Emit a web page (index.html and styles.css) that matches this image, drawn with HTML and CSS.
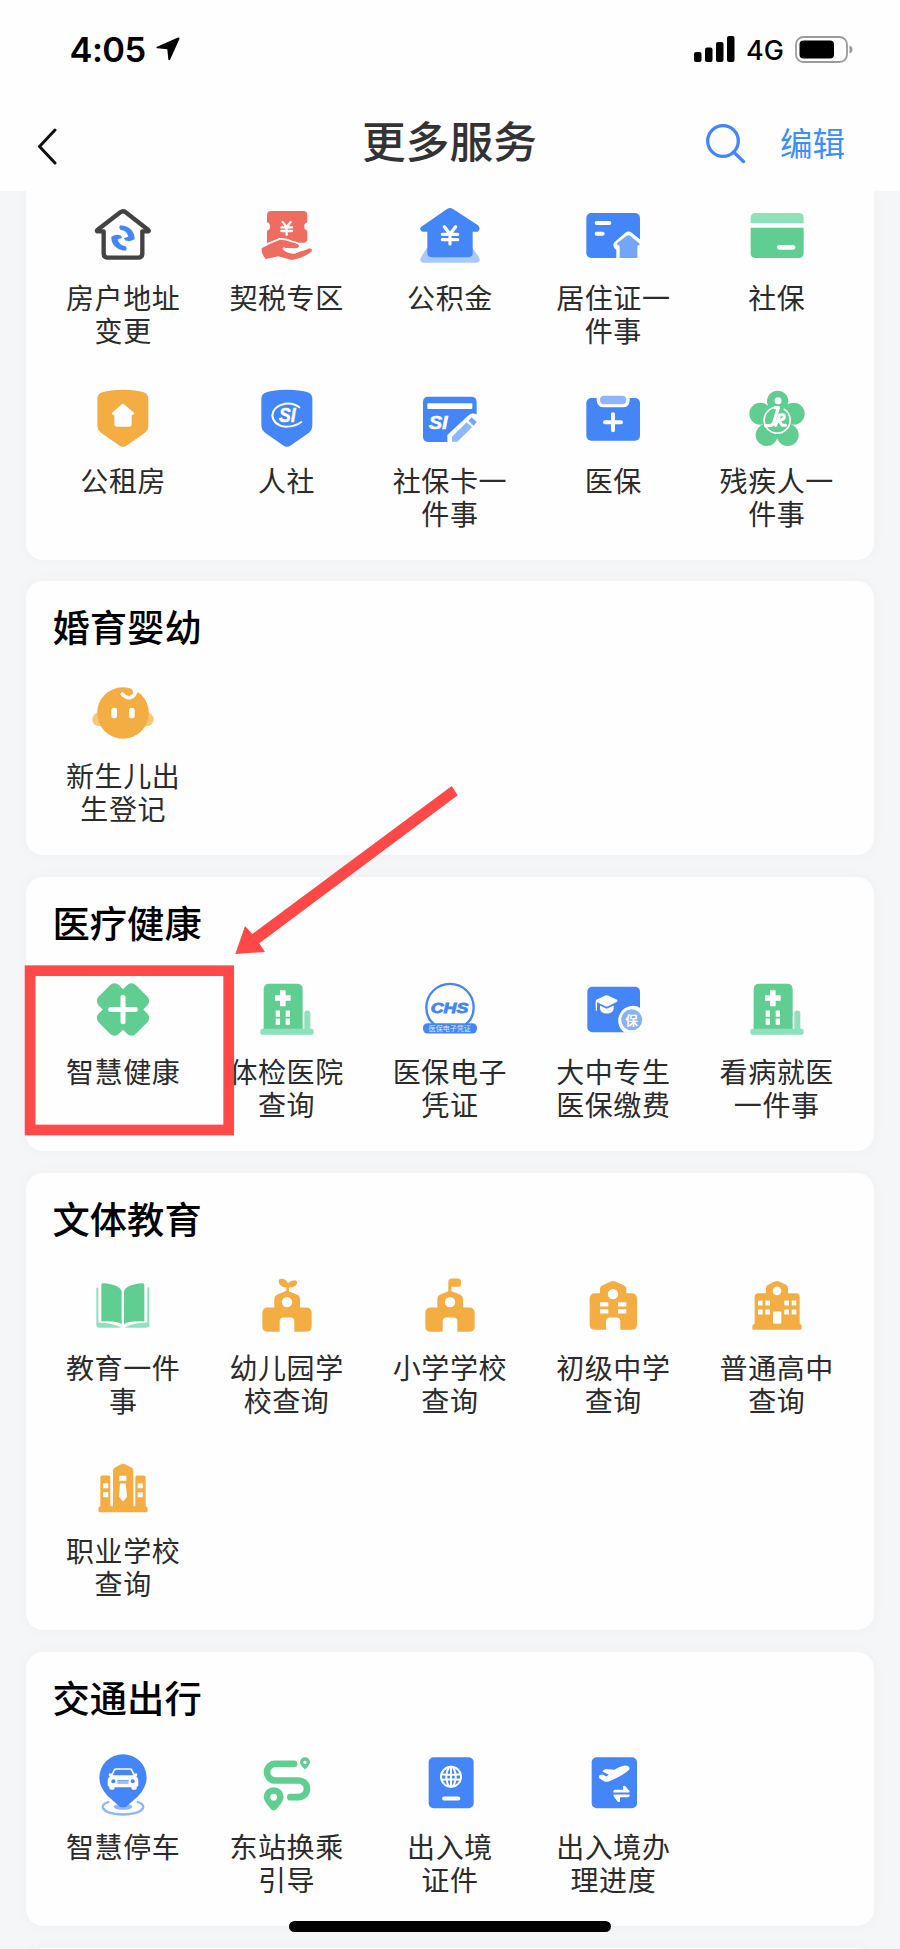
FILE: index.html
```html
<!DOCTYPE html>
<html lang="zh-CN">
<head>
<meta charset="utf-8">
<title>更多服务</title>
<link rel="stylesheet" href="styles.css">
</head>
<body>
<svg class="defs" aria-hidden="true">
  <symbol id="shield" viewBox="214 588 192 192"><path d="M310 599Q350 599 372 607Q386 612 386 626V706Q386 720 376 728L322 766Q310 775 298 766L244 728Q233 720 233 706V626Q233 612 248 607Q270 599 310 599Z"/></symbol>
  <symbol id="hospital" viewBox="705 352.5 192 192">
    <rect class="green-l" x="853" y="453" width="18" height="64" rx="9"/>
    <path class="green" d="M731 510V390Q731 373 748 373H831Q848 373 848 390V510Z"/>
    <rect class="green-l" x="721" y="508" width="160" height="18" rx="8"/>
    <path class="white" d="M780 392h17v15h15v17h-15v16h-17v-16h-15v-17h15zM767 453h13v19h-13zM797 453h13v19h-13zM767 477h13v19h-13zM797 477h13v19h-13z"/>
  </symbol>
  <symbol id="school" viewBox="705 310.5 192 192">
    <path class="orange" d="M763 414V388Q763 379 771 376L794 366Q801 362 808 366L832 376Q840 379 840 388V414H858Q875 414 875 431V470Q875 487 858 487H823V456Q823 444 811 444H791Q779 444 779 456V487H744Q727 487 727 470V431Q727 414 744 414Z"/>
    <circle class="white" cx="801" cy="398" r="15.500"/>
  </symbol>
</svg>
<div class="screen">
  <header class="header">
    <div class="status">
      <div class="clock"><span>4:05</span>
        <svg width="24" height="24" viewBox="0 0 24 24"><path d="M1 9.800L22 .6Q24 .2 23.400 2L14.200 22.600Q13 24 12.300 22.300L11.300 12.300L1.300 11.200Q-.2 10.600 1 9.800Z"/></svg>
      </div>
      <div class="signal">
        <svg width="41" height="27" viewBox="0 0 41 27"><rect x="0" y="16" width="7.500" height="10" rx="2"/><rect x="11" y="11.500" width="7.500" height="14.500" rx="2"/><rect x="22" y="6" width="7.500" height="20" rx="2"/><rect x="33" y="0" width="7.500" height="26" rx="2"/></svg>
        <span>4G</span>
        <svg class="battery" width="58" height="27" viewBox="0 0 58 27"><rect class="shell" x="1" y="1" width="51" height="25" rx="7.500"/><rect x="4.500" y="4.500" width="34.500" height="18" rx="4"/><path class="cap" d="M54.500 9.500Q57.500 10.500 57.500 13.500T54.500 17.500Z"/></svg>
      </div>
    </div>
    <nav class="nav">
      <svg class="back" width="20" height="37" viewBox="0 0 20 37"><path d="M18 2L2.500 18.500L18 35"/></svg>
      <h1>更多服务</h1>
      <div class="actions">
        <svg class="search" width="40" height="40" viewBox="0 0 40 40"><circle cx="17" cy="17" r="15.300"/><path d="M27.500 28L37.500 37.500"/></svg>
        <span>编辑</span>
      </div>
    </nav>
  </header>

  <main class="list">
    <section class="card first">
      <div class="grid">
        <div class="item"><svg viewBox="214 39 192 192">
          <path class="dark-line" d="M252 124H233Q230 123 233 120L302 67Q310 61 318 67L386 120Q389 123 386 124H368V190Q368 203 355 203H265Q252 203 252 190Z"/>
          <g class="blue"><path d="M302 106C332 108 346 128 345 148Q330 157 316 151L313 144L326 140Q322 121 302 119Q296 112 302 106Z"/><path d="M302 106C332 108 346 128 345 148Q330 157 316 151L313 144L326 140Q322 121 302 119Q296 112 302 106Z" transform="rotate(180 310 144)"/></g></svg>
          <p>房户地址<br>变更</p></div>
        <div class="item"><svg viewBox="705 39 192 192">
          <path class="red" d="M754 63H850Q862 63 862 75V97A13 13 0 0 0 862 122V148Q862 158 852 158H741V122A13 13 0 0 0 741 97V75Q741 63 754 63Z"/>
          <path class="cut red" d="M725 175Q750 160 780 149Q798 148 815 157Q836 160 838 169Q833 177 818 174L791 174Q800 187 822 187Q850 185 868 175Q880 177 874 185Q850 204 815 210L775 199L737 207Q724 192 725 175Z"/>
          <path class="white-line" stroke-width="8" d="M792 176Q804 187 824 187Q842 182 842 168"/>
          <path class="white-line" stroke-width="7" d="M788 96L800 111L812 96M800 111V134M784 112H816M784 123H816"/></svg>
          <p>契税专区</p></div>
        <div class="item"><svg viewBox="-66 39 192 192">
          <path class="blue-p" d="M-40 174L-58 204Q-62 218 -48 218H108Q122 218 118 204L98 174Z"/>
          <path class="blue" d="M-56 110L21 57Q30 51 39 57L114 106Q124 117 113 125H98V188Q98 202 84 202H-24Q-38 202 -38 188V125H-52Q-65 120 -56 110Z"/>
          <path class="white-line" stroke-width="9.500" d="M13 110L30 132L47 110M30 132V162M7 133H53M7 149H53"/></svg>
          <p>公积金</p></div>
        <div class="item"><svg viewBox="425 39 192 192">
          <rect class="blue" x="441" y="69" width="161" height="135" rx="15"/>
          <path class="white-line" stroke-width="12" d="M472 99H510M472 131H490"/>
          <path class="white" d="M531 206V180Q516 168 526 156L558 128Q567 121 577 128L604 150V206Z"/>
          <path class="blue-m" d="M534 159L561 138Q567 133 573 138L601 161Q603 167 594 167V204H541V167Q530 166 534 159Z"/></svg>
          <p>居住证一<br>件事</p></div>
        <div class="item"><svg viewBox="914 39 192 192">
          <path class="green-l" d="M931 100V84Q931 69 946 69H1075Q1090 69 1090 84V100Z"/>
          <path class="green" d="M931 113H1090V189Q1090 204 1075 204H946Q931 204 931 189Z"/>
          <path class="white-line" stroke-width="14" d="M1017 172H1058"/></svg>
          <p>社保</p></div>
        <div class="item"><svg viewBox="214 588 192 192">
          <use class="orange" href="#shield" x="214" y="588" width="192" height="192"/>
          <path class="white" d="M305 644Q310 639 315 644L343 668Q346 674 336 675V703Q336 710 329 710H291Q284 710 284 703V675Q274 674 277 668Z"/></svg>
          <p>公租房</p></div>
        <div class="item"><svg viewBox="705 588 192 192">
          <use class="blue" href="#shield" x="705" y="588" width="192" height="192"/>
          <path class="white-line" stroke-width="6" d="M838 652Q820 638 795 641Q760 648 757 676Q760 706 797 710Q826 710 844 696"/>
          <text class="si" x="777" y="697" font-size="62" textLength="50" lengthAdjust="spacingAndGlyphs">SI</text></svg>
          <p>人社</p></div>
        <div class="item"><svg viewBox="-66 588 192 192">
          <rect class="blue" x="-51" y="620" width="161" height="136" rx="15"/>
          <rect class="white" x="-38" y="640" width="135" height="17" rx="3"/>
          <text class="si" x="-34" y="718" font-size="54" textLength="57" lengthAdjust="spacingAndGlyphs">SI</text>
          <path class="white" d="M22 760V735L84 677Q96 666 112 674V760Z"/>
          <path class="blue-l" d="M36 755V740L80 697L96 712L52 755Z"/><path class="blue-m" d="M85 692L95 682L110 696L101 707Z"/></svg>
          <p>社保卡一<br>件事</p></div>
        <div class="item"><svg viewBox="425 588 192 192">
          <rect class="blue" x="441" y="624" width="161" height="128" rx="15"/>
          <path class="white" d="M472 620H571V632Q569 651 551 652H493Q475 651 472 632Z"/>
          <rect class="blue-l" x="482" y="617" width="79" height="26" rx="12"/>
          <path class="white-line" stroke-width="12" d="M521 673V721M497 697H545"/></svg>
          <p>医保</p></div>
        <div class="item"><svg viewBox="914 588 192 192">
          <g class="green"><circle cx="1012" cy="634" r="32"/><circle cx="960" cy="671" r="33"/><circle cx="1060" cy="671" r="33"/><circle cx="979" cy="735" r="33"/><circle cx="1042" cy="735" r="33"/><circle cx="1011" cy="688" r="46"/></g>
          <circle class="white" cx="1013" cy="632" r="10.500"/>
          <path class="white-line" stroke-width="5" d="M997 654A39 39 0 1 0 1032 658"/>
          <path class="white-line" stroke-width="10" d="M1004 653H1014L1000 699Q997 708 976 707"/>
          <path class="white-line" stroke-width="9" d="M1006 706L1018 675Q1034 671 1032 682Q1029 691 1015 690L1026 706H1036"/></svg>
          <p>残疾人一<br>件事</p></div>
      </div>
    </section>

    <section class="card">
      <h2>婚育婴幼</h2>
      <div class="grid">
        <div class="item"><svg viewBox="214 336 192 192">
          <circle class="orange-l" cx="239" cy="451" r="21"/><circle class="orange-l" cx="381" cy="451" r="21"/>
          <circle class="orange" cx="310" cy="432" r="77.500"/>
          <rect class="white" x="275" y="416" width="17" height="32" rx="8"/><rect class="white" x="328" y="416" width="17" height="32" rx="8"/>
          <path class="white" d="M336 354L359 366L350 374L338 370Z"/>
          <path class="white-line" stroke-width="11" d="M308 375Q318 388 331 386Q346 382 348 367"/>
          <circle class="orange" cx="331" cy="368" r="8"/></svg>
          <p>新生儿出<br>生登记</p></div>
      </div>
    </section>

    <section class="card">
      <h2>医疗健康</h2>
      <div class="grid">
        <div class="item"><svg viewBox="214 352.5 192 192">
          <g class="green"><rect x="231" y="407" width="158" height="86" rx="19" transform="rotate(45 310 450)"/><rect x="231" y="407" width="158" height="86" rx="19" transform="rotate(-45 310 450)"/></g>
          <path class="white-line" stroke-width="15" stroke-linecap="butt" d="M310 413V487M273 450H347"/></svg>
          <p>智慧健康</p></div>
        <div class="item"><svg viewBox="705 352.5 192 192"><use href="#hospital" x="705" y="352.5" width="192" height="192"/></svg>
          <p>体检医院<br>查询</p></div>
        <div class="item"><svg viewBox="-66 352.5 192 192">
          <circle class="blue-line" cx="30" cy="444" r="71"/>
          <path class="white" d="M-40 482H100V496H-40Z"/>
          <path class="blue-line" d="M-32 479Q-25 488 -16 495M92 479Q85 488 76 495"/>
          <text class="chs" x="-28" y="460" font-size="45" textLength="113" lengthAdjust="spacingAndGlyphs">CHS</text>
          <rect class="blue" x="-51" y="491" width="162" height="31" rx="14"/>
          <text class="tag" x="-34" y="515" font-size="21">医保电子凭证</text></svg>
          <p>医保电子<br>凭证</p></div>
        <div class="item"><svg viewBox="425 352.5 192 192">
          <rect class="blue" x="444" y="382" width="158" height="136" rx="15"/>
          <path class="white" d="M498 408Q502 406 506 408L533 421Q537 424 533 427L506 440Q502 442 498 440L471 427Q467 424 471 421ZM482 438L502 448L523 438V448Q521 462 502 462Q484 462 482 448Z"/>
          <path class="white-line" stroke-width="4" d="M471 427V452"/>
          <path class="white" d="M604 446V520H557A42 42 0 1 1 604 446Z"/>
          <circle class="blue-g" cx="577" cy="481" r="31.500"/>
          <text class="bao" x="558" y="495" font-size="38">保</text></svg>
          <p>大中专生<br>医保缴费</p></div>
        <div class="item"><svg viewBox="705 352.5 192 192"><use href="#hospital" x="705" y="352.5" width="192" height="192"/></svg>
          <p>看病就医<br>一件事</p></div>
      </div>
    </section>

    <section class="card">
      <h2>文体教育</h2>
      <div class="grid">
        <div class="item"><svg viewBox="214 310.5 192 192">
          <path class="green" d="M245 346Q245 341 250 341Q300 344 306 366V464Q290 453 245 456ZM374 346Q374 341 369 341Q319 344 313 366V464Q329 453 374 456Z"/>
          <path class="green-l" d="M230 356Q233 350 236 356V459Q275 460 303 473Q301 475 290 475H240Q230 475 230 465ZM389 356Q386 350 383 356V459Q344 460 316 473Q318 475 329 475H379Q389 475 389 465Z"/></svg>
          <p>教育一件<br>事</p></div>
        <div class="item"><svg viewBox="705 310.5 192 192"><use href="#school" x="705" y="310.500" width="192" height="192"/>
          <path class="orange" d="M799 370V354Q780 353 776 338Q775 327 786 328Q798 329 804 341Q813 332 824 332Q833 333 831 341Q828 352 807 354V370Z"/></svg>
          <p>幼儿园学<br>校查询</p></div>
        <div class="item"><svg viewBox="705 310.5 192 192"><use href="#school" x="705" y="310.500" width="192" height="192"/>
          <path class="orange" d="M796 370V338Q796 327 807 327H825Q834 328 834 336V344Q833 352 824 352H805V370Z"/></svg>
          <p>小学学校<br>查询</p></div>
        <div class="item"><svg viewBox="425 310.5 192 192">
          <path class="orange" d="M482 371V357Q482 350 490 347L514 336Q521 333 528 336L553 347Q561 350 561 358V371H576Q593 371 593 388V464Q593 481 576 481H543V456Q543 444 531 444H512Q500 444 500 456V481H468Q451 481 451 464V388Q451 371 468 371Z"/>
          <circle class="white" cx="521" cy="374" r="15.500"/>
          <path class="white" d="M482 398h25v13h-25zM482 419h25v13h-25zM536 398h25v13h-25zM536 419h25v13h-25z"/></svg>
          <p>初级中学<br>查询</p></div>
        <div class="item"><svg viewBox="914 310.5 192 192">
          <path class="orange" d="M977 371V356Q977 349 984 346L1003 336Q1010 333 1017 336L1037 346Q1043 349 1043 356V371H1068Q1078 372 1078 382V463Q1084 464 1084 470V477Q1084 481 1079 481H941Q936 481 936 477V470Q936 464 943 463V382Q943 372 953 371Z"/>
          <circle class="white" cx="1010" cy="364" r="13"/>
          <path class="white" d="M953 393h14v15h-14zM975 393h14v15h-14zM1032 393h14v15h-14zM1054 393h14v15h-14zM953 420h14v15h-14zM975 420h14v15h-14zM1032 420h14v15h-14zM1054 420h14v15h-14z"/>
          <rect class="white" x="998" y="426" width="25" height="37" rx="4"/></svg>
          <p>普通高中<br>查询</p></div>
        <div class="item"><svg viewBox="214 859.5 192 192">
          <path class="orange" d="M242 1010V924Q242 918 248 918H267Q272 918 272 924V1010H280V904Q280 897 286 894L304 884Q310 881 316 884L335 894Q341 897 341 904V1010H347V924Q347 918 352 918H372Q378 918 378 924V1010Q384 1011 384 1018V1023Q384 1028 379 1028H241Q236 1028 236 1023V1018Q236 1011 242 1010Z"/>
          <path class="white" d="M250 941h16v15h-16zM250 968h16v15h-16zM354 941h15v15h-15zM354 968h15v15h-15zM299 919h21v15h-21zM301 942H318L322 981L310 997L298 981Z"/></svg>
          <p>职业学校<br>查询</p></div>
      </div>
    </section>

    <section class="card">
      <h2>交通出行</h2>
      <div class="grid">
        <div class="item"><svg viewBox="214 397.5 192 192">
          <path class="base-line" d="M266 548Q246 553 250 566Q260 584 310 585Q360 584 370 566Q374 553 354 548"/>
          <ellipse class="blue-l" cx="310" cy="562" rx="28" ry="9"/>
          <path class="blue" d="M310 404A71 71 0 0 1 381 475Q380 505 355 530L321 560Q310 567 299 560L265 530Q240 505 239 475A71 71 0 0 1 310 404Z"/>
          <path class="white" d="M276 462L282 450Q284 446 290 446H330Q336 446 338 450L344 462L352 462Q354 468 350 470Q356 476 356 484V497Q356 501 351 502V507Q350 511 345 511H339Q335 511 335 503H285Q285 511 281 511H275Q270 511 269 507V502Q264 501 264 497V484Q264 476 270 470Q266 468 268 462Z"/>
          <path class="blue" d="M286 453Q287 451 290 451H330Q333 451 334 453L341 467H279Z"/><circle class="blue" cx="281" cy="485" r="6"/><circle class="blue" cx="339" cy="485" r="6"/><path class="blue" d="M293 482h34v4h-34zM293 489h34v3h-34z"/></svg>
          <p>智慧停车</p></div>
        <div class="item"><svg viewBox="705 397.5 192 192">
          <path class="route" d="M822 433H766A25 25 0 0 0 766 483H836A25 25 0 0 1 836 533H811"/>
          <path class="green" d="M761 503A30 30 0 0 1 791 533Q789 548 768 570Q761 576 754 570Q733 548 731 533A30 30 0 0 1 761 503ZM855 413A15 15 0 0 1 870 428Q869 437 855 450Q841 437 840 428A15 15 0 0 1 855 413Z"/>
          <circle class="white" cx="761" cy="533" r="10"/><circle class="white" cx="855" cy="429" r="5"/></svg>
          <p>东站换乘<br>引导</p></div>
        <div class="item"><svg viewBox="-66 397.5 192 192">
          <rect class="blue" x="-34" y="413" width="135" height="153" rx="15"/>
          <g class="globe"><circle cx="33" cy="472" r="30"/><ellipse cx="33" cy="472" rx="14" ry="30"/><path d="M33 442V502M4 464Q33 468 62 464M4 481Q33 477 62 481"/></g>
          <path class="white-line" stroke-width="12" d="M12 537H55"/></svg>
          <p>出入境<br>证件</p></div>
        <div class="item"><svg viewBox="425 397.5 192 192">
          <rect class="blue" x="457" y="413" width="136" height="153" rx="15"/>
          <path class="white" d="M489 456Q494 446 506 449L525 451Q545 439 557 438Q573 439 570 450Q552 468 506 487Q495 488 480 476Q476 465 490 465L502 471L508 465Z"/>
          <path class="white" d="M522 519Q521 511 528 511H551V500Q555 497 559 501L571 515Q571 519 568 519ZM571 525Q572 533 565 533H542V546Q538 550 534 545L522 529Q521 525 525 525Z"/></svg>
          <p>出入境办<br>理进度</p></div>
      </div>
    </section>
    <section class="card"></section>
  </main>

  <svg class="marks" width="900" height="1949" viewBox="0 0 900 1949">
    <rect x="30.100" y="970.700" width="198.600" height="159.300"/>
    <path d="M451.700 786L457.700 795.300L259.300 943.300L265 952L235.300 954L245 926L252.300 934Z"/>
  </svg>
  <div class="home-bar"></div>
</div>
</body>
</html>
```

FILE: styles.css
```css
* { box-sizing: border-box; }
body {
  margin: 0;
  background: #f5f6f8;
  font-family: "Noto Sans CJK SC", sans-serif;
}
h1, h2, p { margin: 0; }
.defs { display: none; }
.screen {
  position: relative;
  width: 900px;
  height: 1949px;
  overflow: hidden;
  background: #f5f6f8;
}

/* status bar and navigation */
.header {
  position: relative;
  z-index: 1;
  height: 191px;
  background: #fefefe;
}
.status {
  display: flex;
  justify-content: space-between;
  align-items: center;
  height: 98px;
  padding: 0 47px 0 69.500px;
  font-family: Inter, sans-serif;
}
.clock { display: flex; align-items: center; gap: 10px; font-size: 34.500px; font-weight: 600; letter-spacing: -0.600px; }
.signal { display: flex; align-items: center; font-size: 27px; font-weight: 500; }
.signal span { margin: 2px 11px 0 11px; }
.battery .shell { fill: none; stroke: #9b9b9b; stroke-width: 1.8; }
.battery .cap { fill: #9b9b9b; }
.nav {
  display: grid;
  grid-template-columns: 1fr auto 1fr;
  align-items: center;
  height: 88px;
  padding: 0 55px 0 37px;
}
.nav h1 { padding: 0 0 6px 17px; color: #333; font-size: 43.7px; font-weight: 500; line-height: 64px; }
.back { fill: none; stroke: #111; stroke-width: 3; stroke-linecap: round; stroke-linejoin: round; margin-top: 9px; }
.actions { display: flex; align-items: center; justify-content: flex-end; gap: 34px; color: #3a8ff8; font-size: 32.500px; line-height: 48px; }
.search { fill: none; stroke: #4486f7; stroke-width: 3.300; stroke-linecap: round; margin-top: 3px; }

/* service cards */
.list { display: flex; flex-direction: column; gap: 22px; padding: 0 26px; }
.card {
  flex: none;
  min-height: 200px;
  padding: 18.500px 15.500px 27.500px;
  border-radius: 17px;
  background: #fefefe;
  box-shadow: 0 0 14px rgba(0, 0, 0, 0.03);
}
.card.first { padding-top: 12px; border-top-left-radius: 0; border-top-right-radius: 0; }
.card h2 { margin: 0 0 29.500px 11px; font-size: 37.300px; font-weight: 500; line-height: 52px; color: #000; }
.card.first + .card { margin-top: -0.500px; }
.grid { display: grid; grid-template-columns: repeat(5, 163.400px); row-gap: 37px; }
.item { display: flex; flex-direction: column; align-items: center; gap: 13.500px; height: 146px; }
.card:not(.first) .grid { padding-bottom: 0.500px; }
.item svg { width: 64px; height: 64px; flex: none; }
.item p { color: #2b2b2b; font-size: 28px; letter-spacing: 0.6px; line-height: 33.700px; text-align: center; white-space: nowrap; }

/* icon paints */
.blue { fill: #4486f7; }
.blue-m { fill: #73a5f9; }
.blue-l { fill: #8fb6fa; }
.blue-p { fill: #a9c8fb; }
.blue-g { fill: #89b2f0; }
.green { fill: #5fce90; }
.green-l { fill: #8fe1bc; }
.orange { fill: #f3ad43; }
.orange-l { fill: #f8c878; }
.red { fill: #ee6d60; }
.white { fill: #fff; }
.cut { stroke: #fff; stroke-width: 10; paint-order: stroke; }
.white-line { fill: none; stroke: #fff; stroke-linecap: round; stroke-linejoin: round; }
.dark-line { fill: none; stroke: #434343; stroke-width: 13; stroke-linejoin: round; }
.blue-line { fill: none; stroke: #4486f7; stroke-width: 7; }
.base-line { fill: none; stroke: #8fb6fa; stroke-width: 7; stroke-linecap: round; }
.route { fill: none; stroke: #5fce90; stroke-width: 20; stroke-linecap: round; }
.globe { fill: none; stroke: #fff; stroke-width: 6; }
.si, .chs { font-family: "Liberation Sans", sans-serif; font-weight: 700; font-style: italic; fill: #fff; }
.si { stroke: #fff; stroke-width: 1.5; }
.chs { fill: #4486f7; stroke: #4486f7; stroke-width: 2.5; }
.tag { fill: #dce9ff; }
.bao { fill: #fff; font-weight: 700; }

/* highlight drawn above the cards */
.marks { position: absolute; left: 0; top: 0; z-index: 2; }
.marks rect { fill: none; stroke: #ff4848; stroke-width: 10.700; }
.marks path { fill: #ff4848; }
.home-bar {
  position: absolute;
  z-index: 3;
  left: 289px;
  top: 1921px;
  width: 322px;
  height: 11px;
  border-radius: 6px;
  background: #000;
}
```
